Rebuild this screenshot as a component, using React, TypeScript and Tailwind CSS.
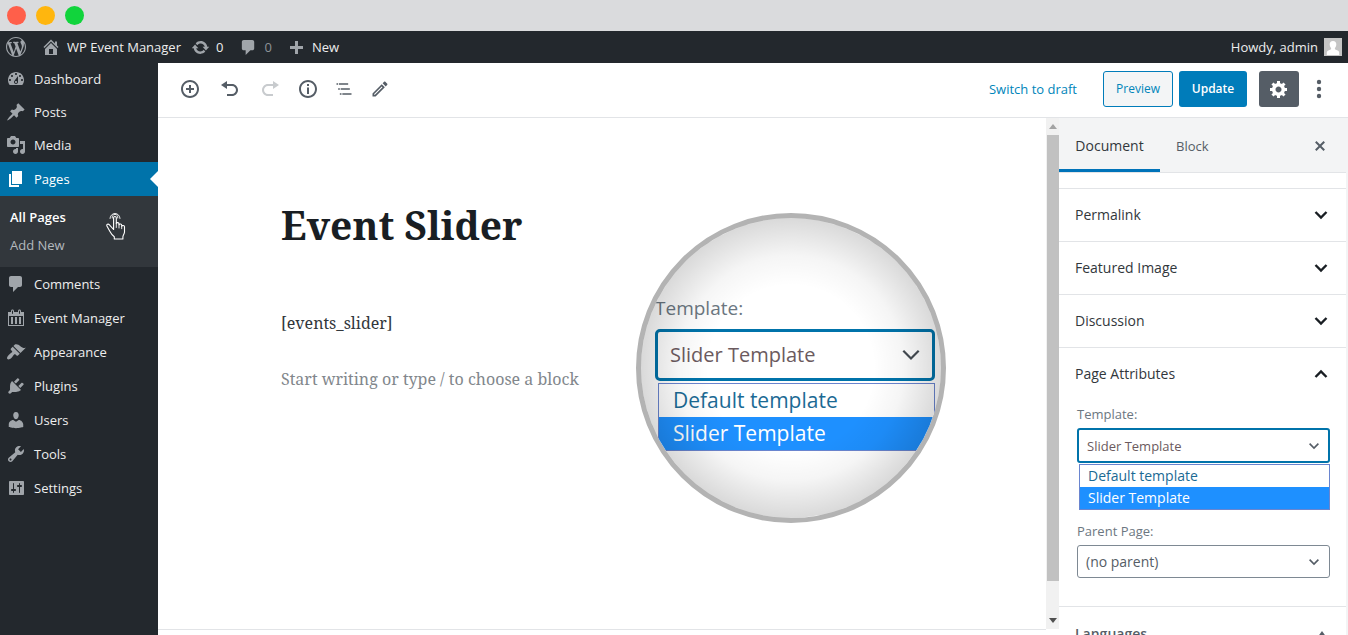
import React from "react";

const WP =
  "M20 10c0-5.51-4.49-10-10-10C4.48 0 0 4.49 0 10c0 5.52 4.48 10 10 10 5.51 0 10-4.48 10-10zM7.78 15.37L4.37 6.22c.55-.02 1.17-.08 1.17-.08.5-.06.44-1.13-.06-1.11 0 0-1.45.11-2.37.11-.18 0-.37 0-.58-.01C4.12 2.69 6.87 1.11 10 1.11c2.33 0 4.45.87 6.05 2.34-.68-.11-1.65.39-1.65 1.58 0 .74.45 1.36.9 2.1.35.61.55 1.36.55 2.46 0 1.49-1.4 5-1.4 5l-3.03-8.37c.54-.02.82-.17.82-.17.5-.05.44-1.25-.06-1.22 0 0-1.44.12-2.38.12-.87 0-2.33-.12-2.33-.12-.5-.03-.56 1.2-.06 1.22l.92.08 1.26 3.41zM17.41 10c.24-.64.74-1.87.43-4.25.7 1.29 1.05 2.71 1.05 4.25 0 3.29-1.73 6.24-4.4 7.78.97-2.59 1.94-5.2 2.92-7.78zM6.1 18.09C3.12 16.65 1.11 13.53 1.11 10c0-1.3.23-2.48.72-3.59C3.25 10.3 4.67 14.2 6.1 18.09zm4.03-6.63l2.58 6.98c-.86.29-1.76.45-2.71.45-.79 0-1.57-.11-2.29-.33.81-2.38 1.62-4.74 2.42-7.1z";
const HOME =
  "M16 8.5l1.53 1.53-1.06 1.06L10 4.6l-6.47 6.47-1.06-1.06L10 2.5l4 4v-2h2v4zm-6-2.46l6 5.99V18H4v-5.97zM12 17v-5H8v5h4z";
const COMMENT =
  "M5 2h9c1.1 0 2 .9 2 2v7c0 1.1-.9 2-2 2h-2l-5 5v-5H5c-1.1 0-2-.9-2-2V4c0-1.1.9-2 2-2z";
const UPDATE =
  "M10.2 3.28c3.53 0 6.43 2.61 6.92 6h2.08l-3.5 4-3.5-4h2.32c-.45-1.97-2.21-3.45-4.32-3.45-1.45 0-2.73.71-3.54 1.78L4.95 5.66C6.23 4.2 8.11 3.28 10.2 3.28zm-.4 13.44c-3.52 0-6.43-2.61-6.92-6H.8l3.5-4c1.17 1.33 2.33 2.67 3.5 4H5.48c.45 1.97 2.21 3.45 4.32 3.45 1.45 0 2.73-.71 3.54-1.78l1.71 1.95c-1.28 1.46-3.15 2.38-5.25 2.38z";
const PLUS = "M17 9v3h-5v5H9v-5H4V9h5V4h3v5h5z";
const DASHBOARD =
  "M3.76 16h12.48c1.1-1.37 1.76-3.11 1.76-5 0-4.42-3.58-8-8-8s-8 3.58-8 8c0 1.89.66 3.63 1.76 5zM10 4c.55 0 1 .45 1 1s-.45 1-1 1-1-.45-1-1 .45-1 1-1zM6 6c.55 0 1 .45 1 1s-.45 1-1 1-1-.45-1-1 .45-1 1-1zm8 0c.55 0 1 .45 1 1s-.45 1-1 1-1-.45-1-1 .45-1 1-1zm-5.37 5.55L12 7v6c0 1.1-.9 2-2 2s-2-.9-2-2c0-.57.24-1.08.63-1.45zM4 10c.55 0 1 .45 1 1s-.45 1-1 1-1-.45-1-1 .45-1 1-1zm12 0c.55 0 1 .45 1 1s-.45 1-1 1-1-.45-1-1 .45-1 1-1zm-5 3c0-.55-.45-1-1-1s-1 .45-1 1 .45 1 1 1 1-.45 1-1z";
const POST =
  "M10.44 3.02l1.82-1.82 6.36 6.35-1.83 1.82c-1.05-.68-2.48-.57-3.41.36l-.75.75c-.92.93-1.04 2.35-.35 3.41l-1.83 1.82-2.41-2.41-2.8 2.79c-.42.42-3.38 2.71-3.8 2.29s1.86-3.39 2.28-3.81l2.79-2.79L4.1 9.36l1.83-1.82c1.05.69 2.48.57 3.4-.36l.75-.75c.93-.92 1.05-2.35.36-3.41z";
const MEDIA =
  "M13 11V4c0-.55-.45-1-1-1h-1.67L9 1H5L3.67 3H2c-.55 0-1 .45-1 1v7c0 .55.45 1 1 1h10c.55 0 1-.45 1-1zM7 4.5c1.38 0 2.5 1.12 2.5 2.5S8.38 9.5 7 9.5 4.5 8.38 4.5 7 5.62 4.5 7 4.5zM14 6h5v10.5c0 1.38-1.12 2.5-2.5 2.5S14 17.88 14 16.5s1.12-2.5 2.5-2.5c.17 0 .34.02.5.05V9h-3V6zm-4 8.05V13h2v3.5c0 1.38-1.12 2.5-2.5 2.5S7 17.88 7 16.5 8.12 14 9.5 14c.17 0 .34.02.5.05z";
const PAGE = "M6 15V2h10v13H6zm-1 1h8v2H3V5h2v11z";
const APPEARANCE =
  "M14.48 11.06L7.41 3.99l1.5-1.5c.5-.56 2.3-.47 3.51.32 1.21.8 1.43 1.28 2.91 2.1 1.18.64 2.45 1.26 4.45.85zm-.71.71L6.7 4.7 4.93 6.47c-.39.39-.39 1.02 0 1.41l1.06 1.06c.39.39.39 1.03 0 1.42-.6.6-1.43 1.11-2.21 1.69-.35.26-.7.53-1.01.84C1.43 14.23.4 16.08 1.4 17.07c.99 1 2.84-.03 4.18-1.36.31-.31.58-.66.85-1.02.57-.78 1.08-1.61 1.69-2.21.39-.39 1.02-.39 1.41 0l1.06 1.06c.39.39 1.02.39 1.41 0z";
const PLUGINS =
  "M13.11 4.36L9.87 7.6 8 5.73l3.24-3.24c.35-.34 1.05-.2 1.56.32.52.51.66 1.21.31 1.55zm-8 1.77l.91-1.12 9.01 9.01-1.19.84c-.71.71-2.63 1.16-3.82 1.16H6.14L4.9 17.26c-.59.59-1.54.59-2.12 0-.59-.58-.59-1.53 0-2.12l1.24-1.24v-3.88c0-1.13.4-3.19 1.09-3.89zm7.26 3.97l3.24-3.24c.34-.35 1.04-.21 1.55.31.52.51.66 1.21.31 1.55l-3.24 3.25z";
const USERS =
  "M10 9.25c-2.27 0-2.73-3.44-2.73-3.44C7 4.02 7.82 2 9.97 2c2.16 0 2.98 2.02 2.71 3.81 0 0-.41 3.44-2.68 3.44zm0 2.57L12.72 10c2.39 0 4.52 2.33 4.52 4.53v2.49s-3.65 1.13-7.24 1.13c-3.65 0-7.24-1.13-7.24-1.13v-2.49c0-2.25 1.94-4.48 4.47-4.48z";
const TOOLS =
  "M16.68 9.77c-1.34 1.34-3.3 1.67-4.95.99l-5.41 6.52c-.99.99-2.59.99-3.58 0s-.99-2.59 0-3.57l6.52-5.42c-.68-1.65-.35-3.61.99-4.95 1.28-1.28 3.12-1.62 4.72-1.06l-2.89 2.89 2.82 2.82 2.86-2.87c.53 1.58.18 3.39-1.08 4.65zM3.81 16.21c.4.39 1.04.39 1.43 0 .4-.4.4-1.04 0-1.43-.39-.4-1.03-.4-1.43 0-.39.39-.39 1.03 0 1.43z";
const SETTINGS =
  "M18 16V4c0-.55-.45-1-1-1H4c-.55 0-1 .45-1 1v12c0 .55.45 1 1 1h13c.55 0 1-.45 1-1zM8 11h1c.55 0 1 .45 1 1s-.45 1-1 1H8v1.5c0 .28-.22.5-.5.5s-.5-.22-.5-.5V13H6c-.55 0-1-.45-1-1s.45-1 1-1h1V5.5c0-.28.22-.5.5-.5s.5.22.5.5V11zm5-2h-1c-.55 0-1-.45-1-1s.45-1 1-1h1V5.5c0-.28.22-.5.5-.5s.5.22.5.5V7h1c.55 0 1 .45 1 1s-.45 1-1 1h-1v5.5c0 .28-.22.5-.5.5s-.5-.22-.5-.5V9z";
const CALENDAR =
  "M15 4h3v14H2V4h3V3c0-.83.67-1.5 1.5-1.5S8 2.17 8 3v1h4V3c0-.83.67-1.5 1.5-1.5S15 2.17 15 3v1zM6 3v2.5c0 .28.22.5.5.5s.5-.22.5-.5V3c0-.28-.22-.5-.5-.5S6 2.72 6 3zm7 0v2.5c0 .28.22.5.5.5s.5-.22.5-.5V3c0-.28-.22-.5-.5-.5s-.5.22-.5.5zm4 14V8H3v9h14zM7 16V9H5v7h2zm4 0V9H9v7h2zm4 0V9h-2v7h2z";
const INSERT =
  "M10 1c-5 0-9 4-9 9s4 9 9 9 9-4 9-9-4-9-9-9zm0 16c-3.9 0-7-3.1-7-7s3.1-7 7-7 7 3.1 7 7-3.1 7-7 7zm1-11H9v3H6v2h3v3h2v-3h3V9h-3V6z";
const INFO =
  "M10 1c-5 0-9 4-9 9s4 9 9 9 9-4 9-9-4-9-9-9zm0 16c-3.9 0-7-3.1-7-7s3.1-7 7-7 7 3.1 7 7-3.1 7-7 7zM9 5h2v2H9zM9 8.5h2V15H9z";
const UNDO = "M12 5H7V2L1 6l6 4V7h5c2.2 0 4 1.8 4 4s-1.8 4-4 4H7v2h5c3.3 0 6-2.7 6-6s-2.7-6-6-6z";
const REDO = "M8 5h5V2l6 4-6 4V7H8c-2.2 0-4 1.8-4 4s1.8 4 4 4h5v2H8c-3.3 0-6-2.7-6-6s2.7-6 6-6z";
const OUTLINE =
  "M5 5H3v2h2V5zm3 8h11v-2H8v2zm9-8H6v2h11V5zM7 11H5v2h2v-2zm0 8h2v-2H7v2zm3-2v2h11v-2H10z";
const PENCIL =
  "M3 17.25V21h3.75L17.81 9.94l-3.75-3.75L3 17.25zM5.92 19H5v-.92l9.06-9.06.92.92L5.92 19zM20.71 5.63l-2.34-2.34c-.2-.2-.45-.29-.71-.29s-.51.1-.7.29l-1.83 1.83 3.75 3.75 1.83-1.83c.39-.39.39-1.02 0-1.41z";
const COG =
  "M18 12h-2.18c-.17.7-.44 1.35-.81 1.93l1.54 1.54-2.1 2.1-1.54-1.54c-.58.36-1.23.63-1.91.79V19H8v-2.18c-.68-.16-1.33-.43-1.91-.79l-1.54 1.54-2.12-2.12 1.54-1.54c-.36-.58-.63-1.23-.79-1.91H1V9.03h2.17c.16-.7.44-1.35.8-1.94L2.43 5.55l2.1-2.1 1.54 1.54c.58-.37 1.24-.64 1.93-.81V2h3v2.18c.68.16 1.33.43 1.91.79l1.54-1.54 2.12 2.12-1.54 1.54c.36.59.64 1.24.8 1.94H18V12zm-8.5 1.5c1.66 0 3-1.34 3-3s-1.34-3-3-3-3 1.34-3 3 1.34 3 3 3z";
const CLOSE =
  "M14.95 6.46L11.41 10l3.54 3.54-1.41 1.41L10 11.42l-3.53 3.53-1.42-1.42L8.58 10 5.05 6.47l1.42-1.42L10 8.58l3.54-3.53z";

function Icon({ d, box = 20, className = "size-5" }: { d: string; box?: number; className?: string }) {
  return (
    <svg viewBox={`0 0 ${box} ${box}`} className={`${className} shrink-0 fill-current`} fillRule="evenodd" aria-hidden="true">
      <path d={d} />
    </svg>
  );
}

function Chevron({ up = false, className = "" }: { up?: boolean; className?: string }) {
  return (
    <svg viewBox="0 0 14 10" className={`shrink-0 fill-none stroke-current ${className}`} aria-hidden="true">
      <path d={up ? "M1.5 8L7 2.5 12.5 8" : "M1.5 2L7 7.5 12.5 2"} />
    </svg>
  );
}

function MenuItem({ icon, label, tall = false }: { icon: string; label: string; tall?: boolean }) {
  return (
    <li>
      <a href="#" className={`flex items-center gap-2 pb-px pl-1.5 text-[#eee] ${tall ? "h-[34px]" : "h-[33px]"}`}>
        <Icon d={icon} className="size-5 text-[#a0a5aa]" />
        {label}
      </a>
    </li>
  );
}

function PanelRow({ label, open = false }: { label: string; open?: boolean }) {
  return (
    <button type="button" aria-expanded={open} className="flex h-[53px] w-full items-center justify-between border-t border-[#e2e4e7] pr-[18px] pb-px pl-4 text-sm font-medium text-[#32373c]">
      {label}
      <Chevron up={open} className="h-2.5 w-3.5 stroke-[2.4] text-[#191e23]" />
    </button>
  );
}

function HandPointer() {
  return (
    <svg viewBox="0 0 20 28" className="mt-4 h-7 w-5 self-start fill-none stroke-white" strokeLinejoin="round" strokeLinecap="round" aria-hidden="true">
      <path d="M4 6.500a5 5 0 1 1 10 0M6.200 6a2.900 2.900 0 1 1 5.600 0" strokeWidth="0.900" />
      <path
        className="fill-[#32373c]"
        strokeWidth="1.100"
        d="M7.600 17.500V5.800c0-1.800 2.700-1.800 2.700 0V11.500c.2-1.300 2.700-1.200 2.700.3v1c.3-1.300 2.700-1.100 2.700.4v1c.4-1.100 2.800-.9 2.800.6v5.200c0 1.800-1.600 3-1.600 4.700v2.300H8.300v-2.300c-1.700-1.300-3.400-3.200-4.500-5.400L.9 13.900c-.5-1.500 1.300-2.300 2.300-1.200l4.400 4.800"
      />
      <path d="M10.300 11.500v4M13 12.800v3.200M15.700 14.200v2.500" strokeWidth="0.900" />
    </svg>
  );
}

export default function App() {
  return (
    <div className="flex h-screen flex-col overflow-hidden bg-white font-['Open_Sans','Noto_Sans',sans-serif] text-[13px] leading-5">
      <div className="flex h-[31px] shrink-0 items-center gap-2.5 bg-[#dadbdd] pl-[7px]">
        <span className="size-[19px] rounded-full bg-[#ff5f4a]" />
        <span className="size-[19px] rounded-full bg-[#ffb60e]" />
        <span className="size-[19px] rounded-full bg-[#11d43c]" />
      </div>

      <header className="flex h-8 shrink-0 items-center bg-[#23282d] pr-1.5 pl-1.5 text-[#eee]">
        <a href="#" aria-label="WordPress" className="text-[#a0a5aa]">
          <Icon d={WP} />
        </a>
        <a href="#" className="ml-[15px] flex items-center gap-1.5">
          <Icon d={HOME} className="size-5 text-[#a0a5aa]" />
          WP Event Manager
        </a>
        <a href="#" className="ml-2.5 flex items-center gap-1.5">
          <Icon d={UPDATE} className="size-[19px] text-[#a0a5aa]" />0
        </a>
        <a href="#" className="ml-4 flex items-center gap-1.5 text-[#8d9297]">
          <Icon d={COMMENT} className="size-[19px] text-[#a0a5aa]" />0
        </a>
        <a href="#" className="ml-3.5 flex items-center gap-1.5">
          <Icon d={PLUS} className="size-5 text-[#a0a5aa]" />
          New
        </a>
        <a href="#" className="ml-auto flex items-center gap-1.5">
          Howdy, admin
          <svg viewBox="0 0 18 18" className="size-[18px]" aria-hidden="true">
            <rect width="18" height="18" fill="#c5c5c5" />
            <path fill="#fff" d="M9 3c2.200 0 3.500 1.600 3.300 3.800-.1 1.500-.8 2.600-1.400 3.300v1.100l3.200 1.500c.9.500 1.100 1.300 1.100 2.300v2H2.800v-2c0-1 .2-1.800 1.100-2.300l3.200-1.500v-1.100c-.6-.7-1.300-1.800-1.400-3.300C5.500 4.600 6.800 3 9 3z" />
          </svg>
        </a>
      </header>

      <div className="flex min-h-0 flex-1">
        <nav className="w-[158px] shrink-0 bg-[#23282d]" aria-label="Main menu">
          <ul>
            <MenuItem icon={DASHBOARD} label="Dashboard" />
            <MenuItem icon={POST} label="Posts" />
            <MenuItem icon={MEDIA} label="Media" />
            <li>
              <a href="#" className="flex h-[34px] items-center gap-2 bg-[#0073aa] pl-1.5 text-white">
                <Icon d={PAGE} />
                Pages
                <svg viewBox="0 0 8 16" className="ml-auto h-4 w-2 fill-white" aria-hidden="true">
                  <path d="M8 0v16L0 8z" />
                </svg>
              </a>
              <div className="flex h-[71px] items-center justify-between bg-[#32373c] pr-8 pl-2.5">
                <ul className="pb-0.5 leading-7">
                  <li>
                    <a href="#" className="font-semibold text-white">All Pages</a>
                  </li>
                  <li>
                    <a href="#" className="text-[#b4b9be]">Add New</a>
                  </li>
                </ul>
                <HandPointer />
              </div>
            </li>
            <MenuItem tall icon={COMMENT} label="Comments" />
            <MenuItem tall icon={CALENDAR} label="Event Manager" />
            <MenuItem tall icon={APPEARANCE} label="Appearance" />
            <MenuItem tall icon={PLUGINS} label="Plugins" />
            <MenuItem tall icon={USERS} label="Users" />
            <MenuItem tall icon={TOOLS} label="Tools" />
            <MenuItem tall icon={SETTINGS} label="Settings" />
          </ul>
        </nav>

        <div className="flex min-w-0 flex-1 flex-col">
          <div className="flex h-[55px] shrink-0 items-center justify-between border-b border-[#e2e4e7] pr-[21px] pb-0.5 pl-[22px]">
            <div className="flex items-center gap-[18px] text-[#555d66]">
              <div className="flex items-center gap-5">
                <button type="button" aria-label="Add block"><Icon d={INSERT} /></button>
                <button type="button" aria-label="Undo"><Icon d={UNDO} /></button>
                <button type="button" aria-label="Redo" className="text-[#c8cbce]"><Icon d={REDO} /></button>
              </div>
              <div className="flex items-center gap-4">
                <button type="button" aria-label="Content structure"><Icon d={INFO} /></button>
                <button type="button" aria-label="Block navigation"><Icon d={OUTLINE} box={24} /></button>
                <button type="button" aria-label="Edit"><Icon d={PENCIL} box={24} /></button>
              </div>
            </div>
            <div className="flex items-center">
              <button type="button" className="mr-[26px] text-[#0085ba]">Switch to draft</button>
              <button type="button" className="mr-1.5 h-9 w-[70px] rounded-[3px] border border-[#007cba] bg-[#f3f5f6] text-xs text-[#0085ba]">Preview</button>
              <button type="button" className="mr-3 h-9 w-[68px] rounded-[3px] bg-[#007cba] text-xs font-semibold text-white">Update</button>
              <button type="button" aria-label="Settings" className="mr-3 flex h-9 w-10 items-center justify-center rounded-[3px] bg-[#555d66] text-white"><Icon d={COG} /></button>
              <button type="button" aria-label="More tools">
                <svg viewBox="0 0 16 20" className="h-5 w-4 fill-[#555d66]" aria-hidden="true">
                  <circle cx="8" cy="3" r="2.200" />
                  <circle cx="8" cy="10" r="2.200" />
                  <circle cx="8" cy="17" r="2.200" />
                </svg>
              </button>
            </div>
          </div>

          <div className="flex min-h-0 flex-1">
            <div className="flex min-w-0 flex-1 flex-col">
              <div className="flex min-h-0 flex-1">
                <main className="flex min-w-0 flex-1 items-start pl-[123px] font-['Noto_Serif','DejaVu_Serif_Condensed','DejaVu_Serif',serif]">
                  <div className="w-[355px] shrink-0 pt-[79px]">
                    <h1 className="text-[39px] leading-14 font-bold text-[#191e23]">Event Slider</h1>
                    <p className="mt-14 text-base leading-7 text-[#32373c]">[events_slider]</p>
                    <p className="mt-7 text-base leading-7 text-[#82878c]">Start writing or type / to choose a block</p>
                  </div>
                  <section aria-label="Template choice, enlarged" className="relative mt-[95px] size-[310px] shrink-0 overflow-hidden rounded-full border-[5px] border-[#b3b3b3] font-['Open_Sans','Noto_Sans',sans-serif]">
                    <div className="flex w-[294px] flex-col pt-[75px] pl-3.5">
                      <label htmlFor="lens-template" className="text-[19px] leading-[30px] text-[#6c7781]">Template:</label>
                      <div className="relative mt-1.5 flex items-center">
                        <select id="lens-template" defaultValue="slider" className="h-[52px] w-full appearance-none rounded-[5px] border-[3px] border-[#0073aa] bg-white pl-3 text-xl text-[#6b5a5e]">
                          <option value="default">Default template</option>
                          <option value="slider">Slider Template</option>
                        </select>
                        <Chevron className="pointer-events-none absolute right-3.5 h-3.5 w-5 stroke-[1.6] text-[#444b52]" />
                      </div>
                      <ul role="listbox" aria-label="Template options, enlarged" className="mt-0.5 ml-[3px] border border-[#6a85cf] bg-white text-[21px] leading-[33px]">
                        <li role="option" aria-selected="false" className="pl-3.5 text-[#1b6a94]">Default template</li>
                        <li role="option" aria-selected="true" className="bg-[#1e90ff] pl-3.5 text-white">Slider Template</li>
                      </ul>
                    </div>
                    <div className="pointer-events-none absolute inset-0 bg-[radial-gradient(circle_closest-side,transparent_55%,rgba(0,0,0,0.04)_75%,rgba(0,0,0,0.15)_100%)]" />
                  </section>
                </main>
                <div className="flex w-[13px] shrink-0 flex-col items-center bg-[#f1f1f1] pt-1.5 pl-px" aria-hidden="true">
                  <svg viewBox="0 0 8 5" className="h-[5px] w-2 fill-[#a3a3a3]"><path d="M0 5l4-5 4 5z" /></svg>
                  <span className="mt-1.5 w-full grow bg-[#c1c1c1]" />
                  <svg viewBox="0 0 8 5" className="mt-[37px] mb-1.5 h-[5px] w-2 fill-[#505050]"><path d="M0 0l4 5 4-5z" /></svg>
                </div>
              </div>
              <div className="mr-[13px] h-1.5 shrink-0 border-t border-[#e2e4e7]" />
            </div>

            <aside className="w-[289px] shrink-0 border-r-2 border-[#f3f4f5]" aria-label="Document settings">
              <div className="flex h-[55px] items-stretch border-b border-[#e2e4e7] bg-[#f3f4f5] pr-4">
                <button type="button" className="w-[101px] border-b-[3px] border-[#0073b9] pt-1 text-sm font-medium text-[#32373c]">Document</button>
                <button type="button" className="px-4 pt-0.5 text-[#555d66]">Block</button>
                <button type="button" aria-label="Close settings" className="ml-auto pt-0.5 text-[#555d66]"><Icon d={CLOSE} /></button>
              </div>
              <div className="mt-[15px]">
                <PanelRow label="Permalink" />
                <PanelRow label="Featured Image" />
                <PanelRow label="Discussion" />
                <PanelRow label="Page Attributes" open />
                <div className="flex h-[206px] flex-col pt-1 pr-4 pl-[18px]">
                  <label htmlFor="template" className="leading-5 text-[#6c7781]">Template:</label>
                  <div className="relative mt-1 flex items-center">
                    <select id="template" defaultValue="slider" className="h-[35px] w-full appearance-none rounded-[3px] border-2 border-[#0073aa] bg-white pl-2 text-[#6b5a5e]">
                      <option value="default">Default template</option>
                      <option value="slider">Slider Template</option>
                    </select>
                    <Chevron className="pointer-events-none absolute right-2.5 h-2 w-3 stroke-2 text-[#555d66]" />
                    <ul role="listbox" aria-label="Template options" className="absolute inset-x-0 top-9 ml-0.5 border border-[#6a85cf] bg-white text-sm leading-[22px]">
                      <li role="option" aria-selected="false" className="pl-2 text-[#1b6a94]">Default template</li>
                      <li role="option" aria-selected="true" className="bg-[#1e90ff] pl-2 text-white">Slider Template</li>
                    </ul>
                  </div>
                  <label htmlFor="parent" className="mt-14 leading-6 text-[#6c7781]">Parent Page:</label>
                  <div className="relative mt-0.5 flex items-center">
                    <select id="parent" className="h-[33px] w-full appearance-none rounded-[3px] border border-[#7e8993] bg-white pl-2 text-sm text-[#555d66]">
                      <option>(no parent)</option>
                    </select>
                    <Chevron className="pointer-events-none absolute right-2.5 h-2 w-3 stroke-2 text-[#555d66]" />
                  </div>
                </div>
                <button type="button" className="flex h-[53px] w-full items-center justify-between border-t border-[#e2e4e7] pt-0.5 pr-[19px] pl-4 text-sm font-semibold text-[#555d66]">
                  Languages
                  <svg viewBox="0 0 10 7" className="h-[7px] w-2.5 fill-[#555d66]" aria-hidden="true"><path d="M0 7l5-7 5 7z" /></svg>
                </button>
              </div>
            </aside>
          </div>
        </div>
      </div>
    </div>
  );
}
